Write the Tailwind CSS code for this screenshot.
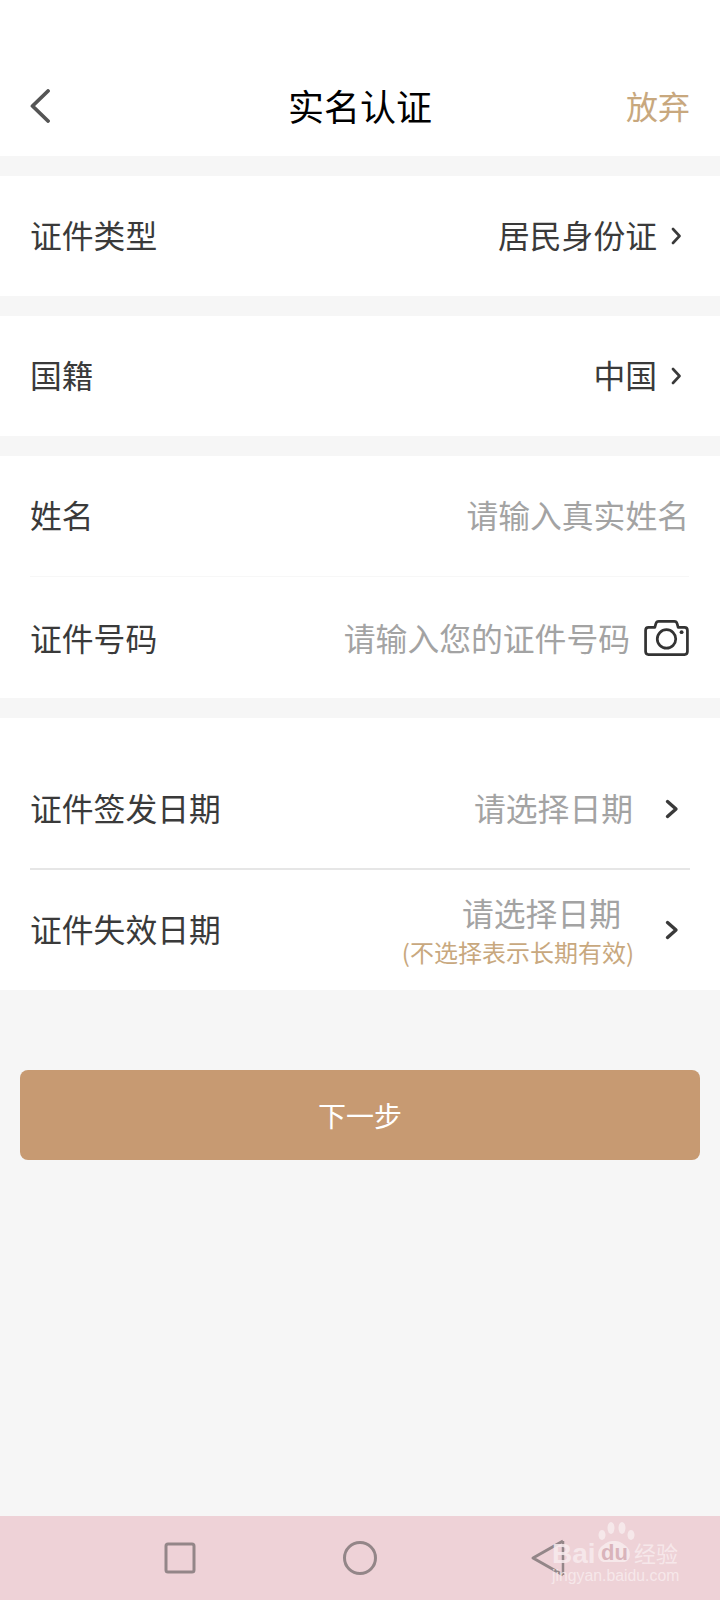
<!DOCTYPE html>
<html lang="zh">
<head>
<meta charset="utf-8">
<script src="https://cdn.jsdelivr.net/npm/@tailwindcss/browser@4"></script>
</head>
<body class="m-0">
<div class="w-[720px] h-[1600px] relative flex flex-col bg-[#f6f6f6] overflow-hidden font-['Noto_Sans_CJK_SC','Noto_Sans',sans-serif] text-[31.8px] leading-none text-[#3a3a3a]">

  <header class="h-[156px] shrink-0 bg-white relative flex items-end justify-between pl-[30px] pr-[30px] pb-[35px]">
    <svg class="w-[20px] h-[34px] mb-[-2px]" viewBox="0 0 20 34" fill="none" stroke="#555" stroke-width="3.8" stroke-linecap="round" stroke-linejoin="round"><path d="M18 2 2.500 17 18 32"/></svg>
    <h1 class="text-[36px] leading-none font-normal text-black absolute left-0 right-0 bottom-[33px] text-center">实名认证</h1>
    <span class="text-[32px] text-[#c8a87e]">放弃</span>
  </header>

  <div class="mt-[20px] h-[120px] pb-[2px] bg-white flex items-center justify-between pl-[30px] pr-[39px]">
    <span>证件类型</span>
    <span class="flex items-center gap-[14px]">居民身份证
      <svg class="w-[10px] h-[18px] mt-[2px]" viewBox="0 0 10 18" fill="none" stroke="#3a3a3a" stroke-width="2.600" stroke-linecap="round" stroke-linejoin="round"><path d="M2 2l6.500 7L2 16"/></svg>
    </span>
  </div>

  <div class="mt-[20px] h-[120px] pb-[2px] bg-white flex items-center justify-between pl-[30px] pr-[39px]">
    <span>国籍</span>
    <span class="flex items-center gap-[14px]">中国
      <svg class="w-[10px] h-[18px] mt-[2px]" viewBox="0 0 10 18" fill="none" stroke="#3a3a3a" stroke-width="2.600" stroke-linecap="round" stroke-linejoin="round"><path d="M2 2l6.500 7L2 16"/></svg>
    </span>
  </div>

  <div class="mt-[20px] bg-white pl-[30px] pr-[31px]">
    <div class="h-[121px] pb-[2px] flex items-center justify-between border-b border-[#f7f7f7]">
      <span>姓名</span>
      <span class="text-[#a3a3a3]">请输入真实姓名</span>
    </div>
    <div class="h-[121px] flex items-center justify-between">
      <span>证件号码</span>
      <span class="flex items-center gap-[14px] text-[#a3a3a3]">请输入您的证件号码
        <svg class="w-[45px] h-[36px]" viewBox="0 0 46 37" fill="none" stroke="#333" stroke-width="2.800" stroke-linejoin="round"><path d="M4.500 7.500H11l1-3.500q.7-2.500 3-2.500h16q2.300 0 3 2.500l1 3.500h6.500q3 0 3 3v22q0 3-3 3h-37q-3 0-3-3v-22q0-3 3-3Z"/><circle cx="23" cy="19.500" r="9.500"/><circle cx="38.500" cy="12.500" r="2" fill="#333" stroke="none"/></svg>
      </span>
    </div>
  </div>

  <div class="mt-[20px] bg-white pl-[30px] pr-[30px] pt-[32px]">
    <div class="h-[120px] pb-[2px] flex items-center justify-between border-b-2 border-[#e6e6e6]">
      <span>证件签发日期</span>
      <span class="flex items-center gap-[32px] pr-[11px] text-[#a3a3a3]"><span>请选择日期</span>
        <svg class="w-[14px] h-[20px] mt-[2px]" viewBox="0 0 14 20" fill="none" stroke="#3a3a3a" stroke-width="3.400" stroke-linecap="round" stroke-linejoin="round"><path d="M2.500 2.500 11 10l-8.500 7.500"/></svg>
      </span>
    </div>
    <div class="h-[120px] pb-[2px] flex items-center justify-between">
      <span>证件失效日期</span>
      <span class="flex items-center gap-[31px] pr-[11px]">
        <span class="flex flex-col items-end">
          <span class="text-[#a3a3a3] pr-[13px] mt-[-16px]">请选择日期</span>
          <span class="text-[24px] text-[#c8a87e] mt-[12px] mb-[-19px]">(不选择表示长期有效)</span>
        </span>
        <svg class="w-[14px] h-[20px] mt-[2px]" viewBox="0 0 14 20" fill="none" stroke="#3a3a3a" stroke-width="3.400" stroke-linecap="round" stroke-linejoin="round"><path d="M2.500 2.500 11 10l-8.500 7.500"/></svg>
      </span>
    </div>
  </div>

  <button class="mt-[80px] mx-[20px] h-[90px] shrink-0 rounded-[8px] bg-[#c79a72] text-white text-[28px] leading-none">下一步</button>

  <nav class="mt-auto h-[84px] shrink-0 bg-[#eed2d7] relative">
    <svg class="absolute left-[164px] top-[26px] w-[32px] h-[32px]" viewBox="0 0 32 32" fill="none" stroke="#938688" stroke-width="3"><rect x="2" y="2" width="28" height="28" rx="2"/></svg>
    <svg class="absolute left-[342px] top-[24px] w-[36px] h-[36px]" viewBox="0 0 36 36" fill="none" stroke="#938688" stroke-width="3"><circle cx="18" cy="18" r="15.500"/></svg>
    <svg class="absolute left-[530px] top-[23px] w-[36px] h-[38px]" viewBox="0 0 36 38" fill="none" stroke="#938688" stroke-width="3" stroke-linejoin="round"><path d="M33 2 3 19l30 17"/><path d="M33 2v34" stroke-width="2.500"/></svg>

    <!-- Baidu watermark -->
    <div class="absolute left-[552px] top-[6px] w-[130px] h-[74px] font-['Liberation_Sans',sans-serif]">
      <svg class="absolute left-[43px] top-[0px] w-[46px] h-[42px]" viewBox="0 0 46 42" fill="#f8ecee" opacity="0.85"><ellipse cx="7" cy="13" rx="3.500" ry="5"/><ellipse cx="16" cy="6" rx="3.500" ry="6"/><ellipse cx="27" cy="6" rx="3.500" ry="6"/><ellipse cx="36" cy="13" rx="3.500" ry="5"/><path d="M19 19c5 0 7 1 12 5 6 5 5 16-3 16H10C2 40 1 29 7 24c5-4 7-5 12-5Z"/></svg>
      <span class="absolute left-0 top-[18px] text-[28px] leading-none font-bold text-[#f8ecee]/85">Bai</span>
      <span class="absolute left-[49px] top-[20px] text-[22px] leading-none font-bold text-[#d9b4bb]">du</span>
      <span class="absolute left-[82px] top-[19px] text-[22px] leading-none font-['Noto_Sans_CJK_SC',sans-serif] text-[#f8ecee]/85">经验</span>
      <span class="absolute left-0 top-[46px] text-[15.800px] leading-none text-[#f8ecee]/85">jingyan.baidu.com</span>
    </div>
  </nav>
</div>
</body>
</html>
